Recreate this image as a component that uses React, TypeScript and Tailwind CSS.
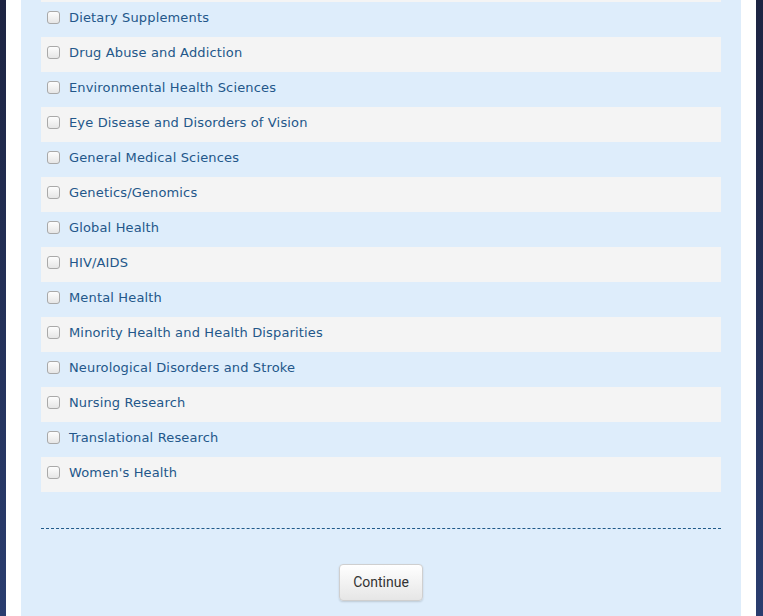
import React from 'react';

const topics = [
  'Dietary Supplements',
  'Drug Abuse and Addiction',
  'Environmental Health Sciences',
  'Eye Disease and Disorders of Vision',
  'General Medical Sciences',
  'Genetics/Genomics',
  'Global Health',
  'HIV/AIDS',
  'Mental Health',
  'Minority Health and Health Disparities',
  'Neurological Disorders and Stroke',
  'Nursing Research',
  'Translational Research',
  "Women's Health",
];

export default function App() {
  return (
    <div className="h-[616px] overflow-hidden bg-gradient-to-b from-[#1d2442] to-[#2a3d6f] pl-[6px] pr-[7px]">
      <div className="bg-white px-[15px] h-full">
        <div className="bg-[#deedfb] h-full px-[20px]">
          <div className="h-[2px] bg-[#f4f4f4]" />
          <ul>
            {topics.map((t, i) => (
              <li
                key={t}
                className={
                  'h-[35px] flex items-center pl-[6px] pb-[4px] ' + (i % 2 === 1 ? 'bg-[#f4f4f4]' : '')
                }
              >
                <span className="w-[13px] h-[13px] rounded-[3px] border border-[#a9a9a9] bg-gradient-to-b from-[#fdfdfd] to-[#e6e6e6] mb-[1px]" />
                <span className="ml-[9px] text-[13px] text-[#23578a] tracking-[0.15px] font-['DejaVu_Sans',Verdana,sans-serif]">
                  {t}
                </span>
              </li>
            ))}
          </ul>
          <div className="mt-[36px] border-t border-dashed border-[#1f5a8a]" />
          <div className="flex justify-center mt-[35px]">
            <button className="w-[84px] h-[37px] rounded-[4px] border border-[#cfcfcf] bg-gradient-to-b from-white to-[#e6e6e6] shadow-[0_1px_2px_rgba(0,0,0,0.15)] text-[14px] text-[#333] font-['Roboto',sans-serif]">
              Continue
            </button>
          </div>
        </div>
      </div>
    </div>
  );
}
